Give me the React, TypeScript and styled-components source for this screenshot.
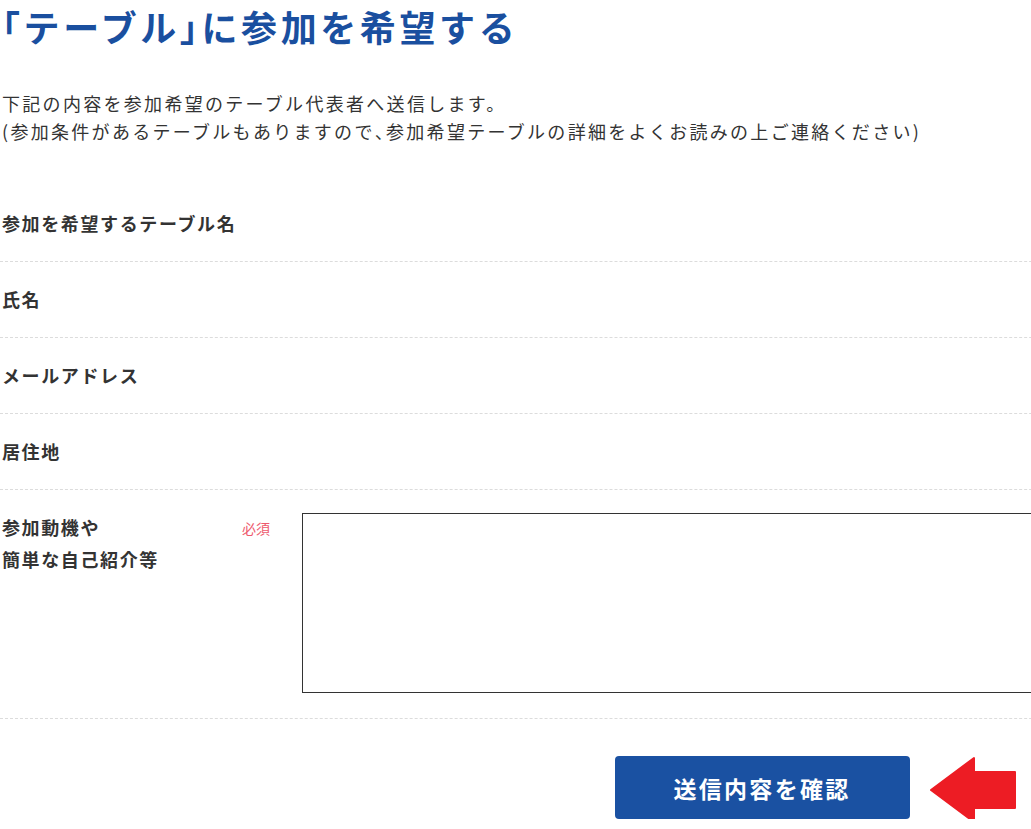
import React from "react"
import styled, { createGlobalStyle } from "styled-components"

const GlobalStyle = createGlobalStyle`
    body {
        margin: 0;
        overflow-x: hidden;
        background: #fff;
        font-family: "Noto Sans CJK JP", "Noto Sans", sans-serif;
        color: #333;
    }
`

const rows = ["参加を希望するテーブル名", "氏名", "メールアドレス", "居住地"]

const App = () => {
    return (
        <Page>
            <GlobalStyle />
            <Title>
                <Half>「</Half>テーブル<Half>」</Half>に参加を希望する
            </Title>
            <Lead>
                下記の内容を参加希望のテーブル代表者へ送信します。
                <br />
                (参加条件があるテーブルもありますので<Half>、</Half>参加希望テーブルの詳細をよくお読みの上ご連絡ください)
            </Lead>
            <Form>
                {rows.map((label) => (
                    <Row key={label}>
                        <LabelCell>
                            <Label>{label}</Label>
                        </LabelCell>
                        <div />
                    </Row>
                ))}
                <Row>
                    <LabelCell>
                        <Label>
                            参加動機や
                            <br />
                            簡単な自己紹介等
                        </Label>
                        <Required>必須</Required>
                    </LabelCell>
                    <TextArea />
                </Row>
                <Actions>
                    <div />
                    <ButtonWrap>
                        <SubmitButton type="button">
                            送信内容を確認
                            <Arrow width="88" height="68" viewBox="0 0 88 68">
                                <path
                                    d="M2 34 L45 2 L45 16 L86 16 L86 52 L45 52 L45 66 Z"
                                    fill="#ed1c24"
                                    stroke="#ed1c24"
                                    strokeWidth="2"
                                    strokeLinejoin="round"
                                />
                            </Arrow>
                        </SubmitButton>
                    </ButtonWrap>
                </Actions>
            </Form>
        </Page>
    )
}

export default App

const Page = styled.div`
    width: 1222px;
    padding: 0 0 0 2px;
    box-sizing: border-box;
`

const Title = styled.h1`
    margin: 0;
    font-size: 36px;
    line-height: 52px;
    font-weight: 700;
    color: #1a4f9f;
    letter-spacing: 0.1em;
`

const Half = styled.span`
    font-feature-settings: "halt";
`

const Lead = styled.p`
    margin: 37px 0 0;
    font-size: 18px;
    line-height: 28px;
    letter-spacing: 2.3px;
    color: #333;
`

const Form = styled.div`
    margin-top: 41px;
    margin-left: -2px;
`

const Row = styled.div`
    display: grid;
    grid-template-columns: 268px 1fr;
    column-gap: 32px;
    padding: 21px 0 22px 2px;
    border-bottom: 1px dashed #dcdcdc;
    align-items: start;
`

const LabelCell = styled.div`
    display: flex;
    justify-content: space-between;
    align-items: flex-start;
`

const Label = styled.div`
    font-size: 18px;
    line-height: 32px;
    font-weight: 700;
    letter-spacing: 0.09em;
    color: #333;
`

const Required = styled.span`
    font-size: 14px;
    line-height: 34px;
    color: #ee5a6e;
`

const TextArea = styled.textarea`
    display: block;
    width: 100%;
    height: 180px;
    margin: 2px 0 3px;
    box-sizing: border-box;
    border: 1px solid #333;
    border-radius: 0;
    resize: none;
    font-family: inherit;
`

const Actions = styled.div`
    display: grid;
    grid-template-columns: 268px 1fr;
    column-gap: 32px;
    padding: 37px 0 0 2px;
`

const ButtonWrap = styled.div`
    display: flex;
    justify-content: center;
`

const SubmitButton = styled.button`
    position: relative;
    width: 295px;
    height: 63px;
    border: none;
    border-radius: 4px;
    background: #1a51a2;
    color: #fff;
    font-family: "Noto Sans CJK JP", "Noto Sans", sans-serif;
    font-size: 23px;
    font-weight: 700;
    letter-spacing: 0.1em;
    cursor: pointer;
`

const Arrow = styled.svg`
    position: absolute;
    left: 314px;
    top: 0;
`
